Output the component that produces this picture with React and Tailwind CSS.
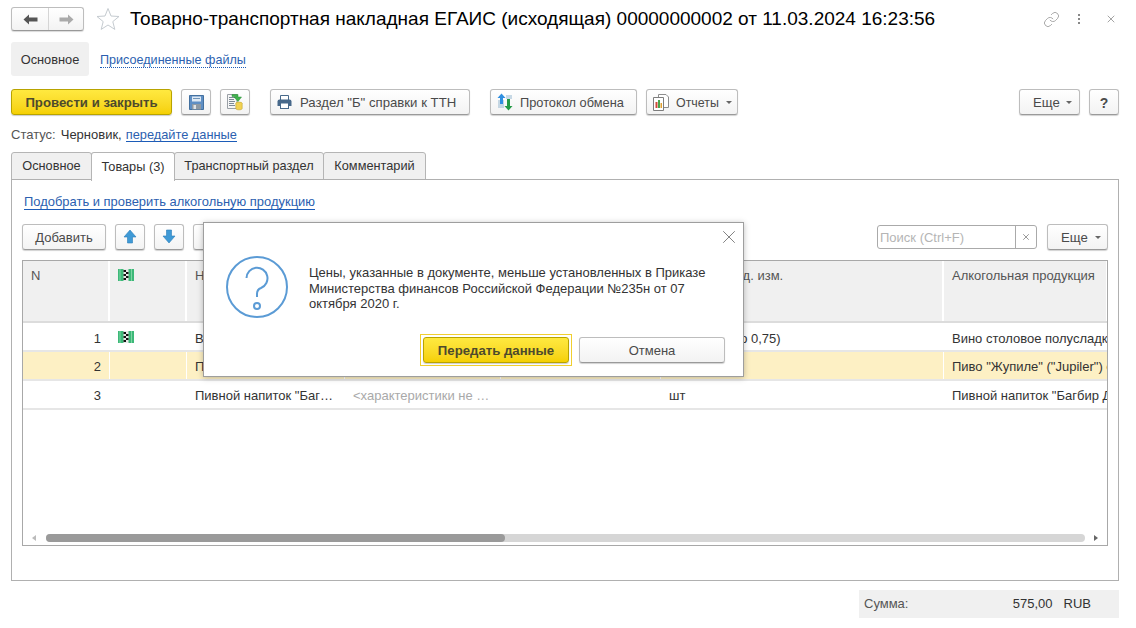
import React from 'react';
import { X, Link } from 'lucide-react';

const FONT = "font-['Liberation_Sans',Arial,sans-serif]";

function Btn({ className = '', children }) {
  return (
    <div className={`flex h-[26px] shrink-0 items-center justify-center rounded-[3px] border border-[#bdbdbd] border-b-[#9a9a9a] bg-gradient-to-b from-white to-[#f3f3f3] text-[#4a4a4a] shadow-[0_1px_1px_rgba(0,0,0,0.18)] ${className}`}>
      {children}
    </div>
  );
}

function YellowBtn({ className = '', children }) {
  return (
    <div className={`flex h-[26px] shrink-0 items-center justify-center rounded-[3px] border border-[#b8a300] bg-gradient-to-b from-[#ffe93f] to-[#f5d000] pt-[2px] text-[13.2px] font-bold text-[#4d4a2c] shadow-[0_1px_1px_rgba(0,0,0,0.2)] ${className}`}>
      {children}
    </div>
  );
}

function Caret({ className = 'ml-[7px]' }) {
  return <span className={`mt-px h-0 w-0 border-x-[3px] border-t-[3px] border-x-transparent border-t-[#666] ${className}`} />;
}

function Arrow({ dir, color }) {
  return (
    <svg width="15" height="11" viewBox="0 0 15 11" className={dir === 'right' ? 'rotate-180' : ''}>
      <path d="M0.5 5.5 L6 0.5 V3.5 H14.5 V7.5 H6 V10.5 Z" fill={color} />
    </svg>
  );
}

function BlueArrow({ down }) {
  return (
    <svg width="14" height="15" viewBox="0 0 14 15" className={down ? 'rotate-180' : ''}>
      <path d="M7 1 L13 8 H9.5 V14 H4.5 V8 H1 Z" fill="#3f9ad6" stroke="#2b7db8" strokeWidth="0.6" />
    </svg>
  );
}

function SaveIcon() {
  return (
    <svg width="15" height="15" viewBox="0 0 15 15">
      <path d="M0.5 0.5 H14.5 V14.5 H0.5 Z" fill="#5f8fc4" stroke="#43709f" />
      <rect x="3" y="1.5" width="9" height="5" fill="#dfe9f3" />
      <rect x="4" y="3" width="7" height="1" fill="#6f93b8" />
      <rect x="3" y="9" width="9" height="5.5" fill="#8e99a3" />
      <rect x="4.5" y="10" width="2.5" height="4" fill="#dfe3e6" />
    </svg>
  );
}

function PostIcon() {
  return (
    <svg width="18" height="18" viewBox="0 0 18 18">
      <path d="M1.5 1.5 H11 V15.5 H1.5 Z" fill="#f6f6f6" stroke="#9aa0a6" />
      <path d="M3 4.5 H9 M3 6.5 H8 M3 8.5 H9 M3 10.5 H8 M3 12.5 H9" stroke="#7d8a96" />
      <path d="M6 1.5 H12 V4 H15.5 L12 8.5 L8 4 H10 V3.5 H6 Z" fill="#3fb24b" stroke="#2b8f38" strokeWidth="0.5" />
      <ellipse cx="13" cy="10.5" rx="3.2" ry="1.4" fill="#f2d252" stroke="#b89a25" strokeWidth="0.5" />
      <path d="M9.8 10.5 V15.5 C9.8 17.3 16.2 17.3 16.2 15.5 V10.5" fill="#f2d252" stroke="#b89a25" strokeWidth="0.5" />
    </svg>
  );
}

function PrintIcon() {
  return (
    <svg width="15" height="14" viewBox="0 0 15 14">
      <path d="M3.5 5 V0.5 H11.5 V5" fill="#fff" stroke="#47688a" />
      <path d="M0.5 6.5 Q0.5 4.5 2.5 4.5 H12.5 Q14.5 4.5 14.5 6.5 V11 H0.5 Z" fill="#47688a" />
      <rect x="3.5" y="8" width="8" height="5.5" fill="#fff" stroke="#47688a" />
    </svg>
  );
}

function ProtocolIcon() {
  return (
    <svg width="16" height="18" viewBox="0 0 16 18">
      <path d="M1 8 H7 M1 10 H7 M1 12 H7 M1 14 H7 M9 3 H15 M9 5 H15" stroke="#93b6cf" />
      <path d="M4.5 0.5 L8.5 5 H6 V11 H3 V5 H0.5 Z" fill="#2f8fe0" />
      <path d="M11.5 17.5 L15.5 13 H13 V6 H10 V13 H7.5 Z" fill="#239a45" />
    </svg>
  );
}

function ReportIcon() {
  return (
    <svg width="16" height="17" viewBox="0 0 16 17">
      <path d="M5.5 0.5 H13 L15.5 3 V13.5 H5.5 Z" fill="#fff" stroke="#8d8d8d" />
      <path d="M0.5 3.5 H10.5 V16.5 H0.5 Z" fill="#fff" stroke="#7d7d7d" />
      <rect x="2.5" y="8" width="2" height="6" fill="#cf4a3a" />
      <rect x="5" y="6" width="2" height="8" fill="#4aa54a" />
      <rect x="7.5" y="9" width="1.5" height="5" fill="#e0a030" />
    </svg>
  );
}

function MarkIcon() {
  return (
    <svg width="16" height="12" viewBox="0 0 16 12">
      <rect x="0" y="0" width="16" height="12" fill="#3db878" />
      <path d="M2 0 V12 M13.5 0 V12" stroke="#8edcb0" strokeWidth="0.8" />
      <rect x="5.5" y="0" width="5" height="12" fill="#e8e8e8" />
      <path d="M5.5 1 H8 V3 H5.5 Z M8 3 H10.5 V5 H8 Z M5.5 5 H8 V7 H5.5 Z M8 7 H10.5 V9 H8 Z M5.5 9 H8 V11 H5.5 Z" fill="#111" />
    </svg>
  );
}

function QuestionIcon() {
  return (
    <svg width="62" height="62" viewBox="0 0 62 62" fill="none" stroke="#5b9bd5" strokeWidth="2">
      <circle cx="31" cy="31" r="30" />
      <path d="M20.5 22 A10.5 10.5 0 1 1 35 32 Q31 33.5 31 38 V41" />
      <circle cx="31" cy="50" r="3" />
    </svg>
  );
}

const COLS = 'grid grid-cols-[87px_77px_158px_156px_160px_283px_164px]';

function Row({ n, mark, name, chars, unit, product, active, pad = 'pt-[5px]' }) {
  const bg = active ? 'bg-[#fdf0c4]' : '';
  const cell = `overflow-hidden whitespace-nowrap px-[8px] ${pad} border-r border-white ${bg}`;
  return (
    <div className={`${COLS} h-[29px] border-b-2 border-[#e6e6e6] text-[#333]`}>
      <div className={`${cell} pr-[8px] text-right`}>{n}</div>
      <div className={`${cell} !pt-[8px]`}>{mark && <MarkIcon />}</div>
      <div className={`${cell} ${active ? 'bg-[#fde08c]' : ''}`}>{name}</div>
      <div className={`${cell} text-[#a9a9a9]`}>{chars}</div>
      <div className={cell} />
      <div className={cell}>{unit}</div>
      <div className={cell}>{product}</div>
    </div>
  );
}

export default function App() {
  return (
    <div className={`relative flex h-[628px] w-[1136px] flex-col overflow-hidden bg-white pl-[11px] pr-[17px] text-[13px] text-[#333] ${FONT}`}>
      {/* шапка */}
      <div className="mt-[7px] flex h-[24px] items-center">
        <div className="flex h-[24px] w-[73px] rounded-[3px] border border-[#bdbdbd] border-b-[#999] bg-gradient-to-b from-white to-[#f3f3f3] shadow-[0_1px_1px_rgba(0,0,0,0.15)]">
          <div className="flex w-[37px] items-center justify-center border-r border-[#d5d5d5]"><Arrow dir="left" color="#555" /></div>
          <div className="flex flex-1 items-center justify-center"><Arrow dir="right" color="#aaa" /></div>
        </div>
        <svg width="24" height="24" viewBox="0 0 24 24" className="ml-[12px]">
          <path d="M12 1.5 L15 9 L23 9.5 L16.8 14.6 L18.8 22.4 L12 18 L5.2 22.4 L7.2 14.6 L1 9.5 L9 9 Z" fill="#fff" stroke="#c5cbd0" />
        </svg>
        <div className="ml-[10px] whitespace-nowrap text-[19px] text-black">Товарно-транспортная накладная ЕГАИС (исходящая) 00000000002 от 11.03.2024 16:23:56</div>
        <div className="ml-auto flex items-center">
          <Link size={17} strokeWidth={1} className="text-[#888]" />
          <div className="ml-[18px] flex flex-col gap-[2px]">
            <span className="h-[2px] w-[2px] bg-[#888]" />
            <span className="h-[2px] w-[2px] bg-[#888]" />
            <span className="h-[2px] w-[2px] bg-[#888]" />
          </div>
          <X size={12} strokeWidth={1.2} className="ml-[25px] mr-[2px] text-[#666]" />
        </div>
      </div>

      {/* закладки формы */}
      <div className="mt-[11px] flex h-[34px] items-center">
        <div className="flex h-[34px] w-[78px] items-center justify-center rounded-[3px] bg-[#f0f0f0] pt-[2px] text-[12.8px]">Основное</div>
        <a className="ml-[11px] mt-[2px] border-b border-dotted border-[#1c5cb8] text-[12.6px] leading-[14px] text-[#2c5fb0]">Присоединенные файлы</a>
      </div>

      {/* командная панель */}
      <div className="mt-[13px] flex items-center">
        <YellowBtn className="w-[161px]">Провести и закрыть</YellowBtn>
        <Btn className="ml-[9px] w-[30px]"><SaveIcon /></Btn>
        <Btn className="ml-[9px] w-[30px]"><PostIcon /></Btn>
        <Btn className="ml-[20px] w-[200px] !justify-start pl-[6px]"><PrintIcon /><span className="ml-[8px] pt-[2px] text-[13.2px]">Раздел "Б" справки к ТТН</span></Btn>
        <Btn className="ml-[20px] w-[147px] !justify-start pl-[6px]"><ProtocolIcon /><span className="ml-[7px] pt-[2px] text-[12.8px]">Протокол обмена</span></Btn>
        <Btn className="ml-[9px] w-[92px] !justify-start pl-[6px]"><ReportIcon /><span className="ml-[7px] pt-[2px] text-[12.4px]">Отчеты</span><Caret /></Btn>
        <Btn className="ml-auto w-[61px] !justify-start pl-[13px]"><span className="pt-[2px] text-[13.2px]">Еще</span><Caret className="ml-[6px]" /></Btn>
        <Btn className="ml-[9px] w-[30px] pt-[2px] text-[14px] font-bold">?</Btn>
      </div>

      {/* статус */}
      <div className="mt-[12px] flex h-[16px] items-center">
        <span className="text-[#555]">Статус:</span>
        <span className="ml-[5px]">Черновик,</span>
        <a className="ml-[4px] border-b border-[#1c5cb8] text-[12.8px] leading-[13px] text-[#2c5fb0]">передайте данные</a>
      </div>

      {/* закладки */}
      <div className="mt-[9px] flex h-[28px] text-[12.75px]">
        <div className="flex w-[81px] items-center justify-center rounded-t-[3px] border border-[#b5b5b5] bg-[#f0f0f0]">Основное</div>
        <div className="relative z-10 -mx-px flex h-[29px] w-[84px] items-center justify-center rounded-t-[3px] border border-b-0 border-[#b5b5b5] bg-white">Товары (3)</div>
        <div className="flex w-[150px] items-center justify-center rounded-t-[3px] border border-[#b5b5b5] bg-[#f0f0f0]">Транспортный раздел</div>
        <div className="-ml-px flex w-[103px] items-center justify-center rounded-t-[3px] border border-[#b5b5b5] bg-[#f0f0f0]">Комментарий</div>
      </div>

      <div className="-mt-px h-[402px] border border-[#b0b0b0] px-[10px]">
        <a className="ml-[2px] mt-[15px] inline-block border-b border-[#1c5cb8] text-[12.95px] leading-[14px] text-[#2c5fb0]">Подобрать и проверить алкогольную продукцию</a>

        <div className="mt-[12px] flex items-center">
          <Btn className="w-[84px] pt-[2px]">Добавить</Btn>
          <Btn className="ml-[9px] w-[30px]"><BlueArrow /></Btn>
          <Btn className="ml-[9px] w-[30px]"><BlueArrow down /></Btn>
          <Btn className="ml-[9px] w-[30px]" />
          <div className="ml-auto flex h-[24px] w-[160px] rounded-[3px] border border-[#aaa]">
            <div className="flex flex-1 items-center border-r border-[#aaa] pl-[2px] pt-[2px] text-[#b5b5b5]">Поиск (Ctrl+F)</div>
            <div className="flex w-[20px] items-center justify-center"><X size={10} strokeWidth={1.6} className="text-[#666]" /></div>
          </div>
          <Btn className="ml-[10px] w-[61px] !justify-start pl-[13px]"><span className="pt-[2px] text-[13.2px]">Еще</span><Caret /></Btn>
        </div>

        {/* таблица */}
        <div className="mt-[10px] h-[286px] overflow-hidden border border-[#a8a8a8]">
          <div className={`${COLS} h-[62px] border-b-2 border-[#dcdcdc] text-[#555]`}>
            {['N', '', 'Номенклатура', 'Характеристика', '', 'Упаковка - ед. изм.', 'Алкогольная продукция'].map((h, i) => (
              <div key={i} className="overflow-hidden whitespace-nowrap border-r-2 border-white bg-[#f0f0f0] px-[8px] pt-[7px] leading-[16px]">
                {i === 1 ? <div className="pt-px"><MarkIcon /></div> : h}
              </div>
            ))}
          </div>
          <Row pad="pt-[6px]" n="1" mark name="Вино столовое" unit={'Бут.\u00A0\u00A0\u00A0(стекло 0,75)'} product="Вино столовое полусладкое" />
          <Row n="2" active name="Пиво" product={'Пиво "Жупиле" ("Jupiler") светлое'} />
          <Row n="3" name={'Пивной напиток "Баг…'} chars="<характеристики не …" unit="шт" product={'Пивной напиток "Багбир Дикая вишня"'} />
          {/* полоса прокрутки */}
          <div className="mt-[124px] flex h-[8px] items-center px-[9px]">
            <span className="h-0 w-0 border-y-[3px] border-r-[4px] border-y-transparent border-r-[#bbb]" />
            <div className="ml-[10px] h-[8px] flex-1 rounded-full bg-[#d6d6d6]">
              <div className="h-[8px] w-[459px] rounded-full bg-[#9a9a9a]" />
            </div>
            <span className="ml-[9px] h-0 w-0 border-y-[3px] border-l-[4px] border-y-transparent border-l-[#666]" />
          </div>
        </div>
      </div>

      {/* итог */}
      <div className="ml-auto mt-[9px] flex h-[28px] w-[260px] items-center bg-[#f0f0f0] pl-[5px] pr-[28px]">
        <span className="text-[#555]">Сумма:</span>
        <span className="ml-auto">575,00</span>
        <span className="ml-[11px]">RUB</span>
      </div>

      {/* диалог */}
      <div className="absolute left-[203px] top-[222px] h-[155px] w-[541px] border border-[#9e9e9e] bg-white shadow-[0_1px_6px_rgba(0,0,0,0.25)]">
        <X size={22} strokeWidth={0.8} className="absolute right-[3px] top-[3px] text-[#555]" />
        <div className="flex pl-[22px] pt-[33px]">
          <QuestionIcon />
          <div className="ml-[21px] w-[410px] pt-[9px] leading-[15.5px]">
            Цены, указанные в документе, меньше установленных в Приказе Министерства финансов Российской Федерации №235н от 07 октября 2020 г.
          </div>
        </div>
        <div className="mt-[19px] flex justify-end pr-[18px]">
          <div className="outline outline-1 outline-offset-[2px] outline-[#f0cf30]">
            <YellowBtn className="w-[146px]">Передать данные</YellowBtn>
          </div>
          <Btn className="ml-[10px] w-[146px] pt-[2px]">Отмена</Btn>
        </div>
      </div>
    </div>
  );
}
